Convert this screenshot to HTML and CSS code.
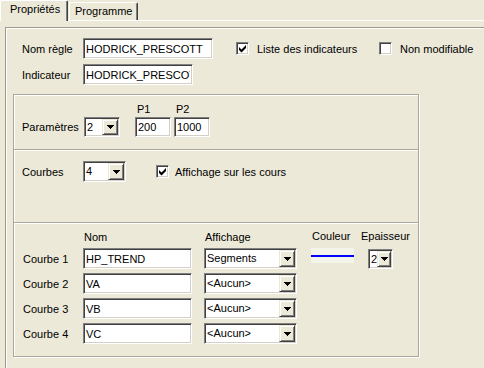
FILE: index.html
```html
<!DOCTYPE html>
<html lang="fr">
<head>
  <meta charset="UTF-8">
  <meta name="viewport" content="width=device-width, initial-scale=1.0">
  <title>Propriétés</title>
  <link rel="stylesheet" href="styles.css">
</head>
<body>
  <!-- Onglets -->
  <div class="tabs">
    <div class="tab active">Propriétés</div>
    <div class="tab">Programme</div>
  </div>

  <!-- Page Propriétés -->
  <div class="frame">
    <div class="row top-row">
      <span class="lbl">Nom règle</span>
      <input class="field w-nom" type="text" value="HODRICK_PRESCOTT" readonly>
      <span class="opt opt-liste">
        <span class="check"><svg width="11" height="11" viewBox="0 0 11 11"><polygon points="2,4 4.5,6.5 9,2 9,5 4.5,9.5 2,7" fill="#000"/></svg></span>
        <span class="opt-text">Liste des indicateurs</span>
      </span>
      <span class="opt">
        <span class="check"></span>
        <span class="opt-text">Non modifiable</span>
      </span>
    </div>
    <div class="row top-row">
      <span class="lbl">Indicateur</span>
      <input class="field w-ind" type="text" value="HODRICK_PRESCOTT" readonly>
    </div>

    <div class="group">
      <!-- Paramètres -->
      <div class="section params">
        <div class="params-head">
          <span class="p-lbl">P1</span>
          <span class="p-lbl">P2</span>
        </div>
        <div class="row">
          <span class="lbl lbl-param">Paramètres</span>
          <div class="combo w-param">
            <span class="combo-val">2</span>
            <span class="combo-btn"><svg width="7" height="4" viewBox="0 0 7 4"><polygon points="0,0 7,0 3.5,4" fill="#000"/></svg></span>
          </div>
          <input class="field w-p p1" type="text" value="200" readonly>
          <input class="field w-p p2" type="text" value="1000" readonly>
        </div>
      </div>

      <!-- Courbes -->
      <div class="section courbes">
        <div class="row">
          <span class="lbl">Courbes</span>
          <div class="combo w-courbes">
            <span class="combo-val">4</span>
            <span class="combo-btn"><svg width="7" height="4" viewBox="0 0 7 4"><polygon points="0,0 7,0 3.5,4" fill="#000"/></svg></span>
          </div>
          <span class="opt opt-cours">
            <span class="check"><svg width="11" height="11" viewBox="0 0 11 11"><polygon points="2,4 4.5,6.5 9,2 9,5 4.5,9.5 2,7" fill="#000"/></svg></span>
            <span class="opt-text">Affichage sur les cours</span>
          </span>
        </div>
      </div>

      <!-- Tableau des courbes -->
      <div class="section table">
        <div class="curves">
          <span></span>
          <span class="hd">Nom</span>
          <span class="hd">Affichage</span>
          <span class="hd hd-up">Couleur</span>
          <span class="hd hd-up">Epaisseur</span>

          <span class="lbl-courbe">Courbe 1</span>
          <input class="field w-name" type="text" value="HP_TREND" readonly>
          <div class="combo w-aff">
            <span class="combo-val">Segments</span>
            <span class="combo-btn"><svg width="7" height="4" viewBox="0 0 7 4"><polygon points="0,0 7,0 3.5,4" fill="#000"/></svg></span>
          </div>
          <span class="swatch"></span>
          <div class="combo w-ep">
            <span class="combo-val">2</span>
            <span class="combo-btn"><svg width="7" height="4" viewBox="0 0 7 4"><polygon points="0,0 7,0 3.5,4" fill="#000"/></svg></span>
          </div>

          <span class="lbl-courbe">Courbe 2</span>
          <input class="field w-name" type="text" value="VA" readonly>
          <div class="combo w-aff">
            <span class="combo-val">&lt;Aucun&gt;</span>
            <span class="combo-btn"><svg width="7" height="4" viewBox="0 0 7 4"><polygon points="0,0 7,0 3.5,4" fill="#000"/></svg></span>
          </div>
          <span></span><span></span>

          <span class="lbl-courbe">Courbe 3</span>
          <input class="field w-name" type="text" value="VB" readonly>
          <div class="combo w-aff">
            <span class="combo-val">&lt;Aucun&gt;</span>
            <span class="combo-btn"><svg width="7" height="4" viewBox="0 0 7 4"><polygon points="0,0 7,0 3.5,4" fill="#000"/></svg></span>
          </div>
          <span></span><span></span>

          <span class="lbl-courbe">Courbe 4</span>
          <input class="field w-name" type="text" value="VC" readonly>
          <div class="combo w-aff">
            <span class="combo-val">&lt;Aucun&gt;</span>
            <span class="combo-btn"><svg width="7" height="4" viewBox="0 0 7 4"><polygon points="0,0 7,0 3.5,4" fill="#000"/></svg></span>
          </div>
          <span></span><span></span>
        </div>
      </div>
    </div>
  </div>
</body>
</html>
```

FILE: styles.css
```css
/* Corps */
html, body {
  margin: 0;
  padding: 0;
  overflow: hidden;
}

body {
  width: 484px;
  height: 368px;
  font-family: "Liberation Sans", Arial, sans-serif;
  font-size: 11px;
  color: #000;
  background-color: #ece9d8;
}

/* Onglets */
.tabs {
  display: flex;
  align-items: flex-start;
  height: 21px;
  box-shadow: inset 0 -1px 0 #fff;
}

.tab {
  box-sizing: border-box;
  border-left: 1px solid #fff;
  border-top: 1px solid #fff;
  border-right: 1px solid #404040;
  border-radius: 2px 2px 0 0;
  box-shadow: inset -1px 0 0 #808080;
  line-height: 17px;
  white-space: nowrap;
}

.tab.active {
  width: 68px;
  height: 21px;
  padding-left: 9px;
  background-color: #ece9d8;
}

.tab:not(.active) {
  width: 69px;
  height: 18px;
  margin: 2px 0 0 1px;
  padding-left: 5px;
}

/* Cadre principal */
.frame {
  width: 600px;
  margin: 6px 0 0 5px;
  padding: 10px 0 20px 7px;
  border: 1px solid #9d9a8c;
  box-shadow: inset 1px 1px 0 #fff;
}

.row {
  display: flex;
  align-items: center;
}

.top-row {
  height: 21px;
  padding-left: 9px;
}

.top-row + .top-row {
  margin-top: 5px;
}

.lbl {
  flex: none;
  width: 61px;
}

.lbl-param {
  width: 62px;
}

/* Champs */
.field {
  box-sizing: border-box;
  flex: none;
  height: 21px;
  margin: 0;
  padding: 0 2px;
  font: inherit;
  color: #000;
  background: #fff;
  border: 1px solid;
  border-color: #808080 #fff #fff #808080;
  box-shadow: inset 1px 1px 0 #404040, inset -1px -1px 0 #d4d0c8;
  outline: none;
}

.w-nom { width: 130px; }
.w-ind { width: 110px; }
.w-p { width: 36px; height: 20px; }
.w-name { width: 109px; }

.p1 { margin-left: 15px; }
.p2 { margin-left: 3px; }

/* Listes déroulantes */
.combo {
  box-sizing: border-box;
  flex: none;
  display: flex;
  height: 21px;
  padding: 1px;
  background: #fff;
  border: 1px solid;
  border-color: #808080 #fff #fff #808080;
  box-shadow: inset 1px 1px 0 #404040, inset -1px -1px 0 #d4d0c8;
}

.combo-val {
  flex: 1;
  min-width: 0;
  padding-left: 1px;
  overflow: hidden;
  white-space: nowrap;
  line-height: 17px;
}

.combo-btn {
  box-sizing: border-box;
  flex: none;
  display: flex;
  align-items: center;
  justify-content: center;
  width: 16px;
  background: #ece9d8;
  border: 1px solid;
  border-color: #ece9d8 #404040 #404040 #ece9d8;
  box-shadow: inset 1px 1px 0 #fff, inset -1px -1px 0 #808080;
}

.combo-btn svg {
  shape-rendering: crispEdges;
}

.w-param { width: 36px; height: 20px; }
.w-courbes { width: 43px; }
.w-aff { width: 93px; }

.w-ep {
  width: 25px;
  height: 20px;
  margin: 1px 0 0 8px;
  align-self: start;
}

.w-ep .combo-val {
  overflow: visible;
  line-height: 16px;
}

.w-ep .combo-btn {
  width: 14px;
}

/* Cases à cocher */
.opt {
  display: flex;
  align-items: center;
}

.opt-liste {
  width: 143px;
  margin-left: 23px;
}

.opt-cours {
  margin-left: 30px;
}

.opt .opt-text {
  margin-left: 8px;
}

.opt-cours .opt-text {
  margin-left: 6px;
}

.check {
  box-sizing: border-box;
  flex: none;
  display: inline-flex;
  width: 13px;
  height: 13px;
  background: #fff;
  border: 1px solid;
  border-color: #808080 #fff #fff #808080;
  box-shadow: inset 1px 1px 0 #404040, inset -1px -1px 0 #d4d0c8;
}

/* Groupes */
.group {
  box-sizing: border-box;
  width: 406px;
  margin-top: 9px;
  border: 1px solid #aca899;
  box-shadow: inset 1px 1px 0 #fff, 1px 1px 0 #fff;
}

.section {
  padding-left: 8px;
}

.section + .section {
  border-top: 1px solid #aca899;
  box-shadow: inset 0 1px 0 #fff;
}

.params {
  padding-top: 8px;
  padding-bottom: 12px;
}

.params-head {
  display: flex;
  height: 13px;
  margin-bottom: 1px;
  padding-left: 115px;
  line-height: 13px;
}

.p-lbl {
  width: 39px;
}

.params .row {
  height: 20px;
}

.courbes {
  padding-top: 11px;
  padding-bottom: 40px;
}

.table {
  padding-top: 7px;
  padding-bottom: 12px;
}

/* Tableau des courbes */
.curves {
  display: grid;
  grid-template-columns: 61px 121px 107px 49px 1fr;
  grid-template-rows: 14px repeat(4, 21px);
  row-gap: 4px;
  align-items: center;
}

.hd {
  padding-left: 1px;
  line-height: 13px;
}

.hd-up {
  align-self: start;
}

.lbl-courbe {
  padding-left: 1px;
}

.swatch {
  align-self: start;
  width: 43px;
  height: 15px;
  background: linear-gradient(to bottom, #f5f4ea 7px, #0000ff 7px, #0000ff 9px, #f5f4ea 9px);
}
```
